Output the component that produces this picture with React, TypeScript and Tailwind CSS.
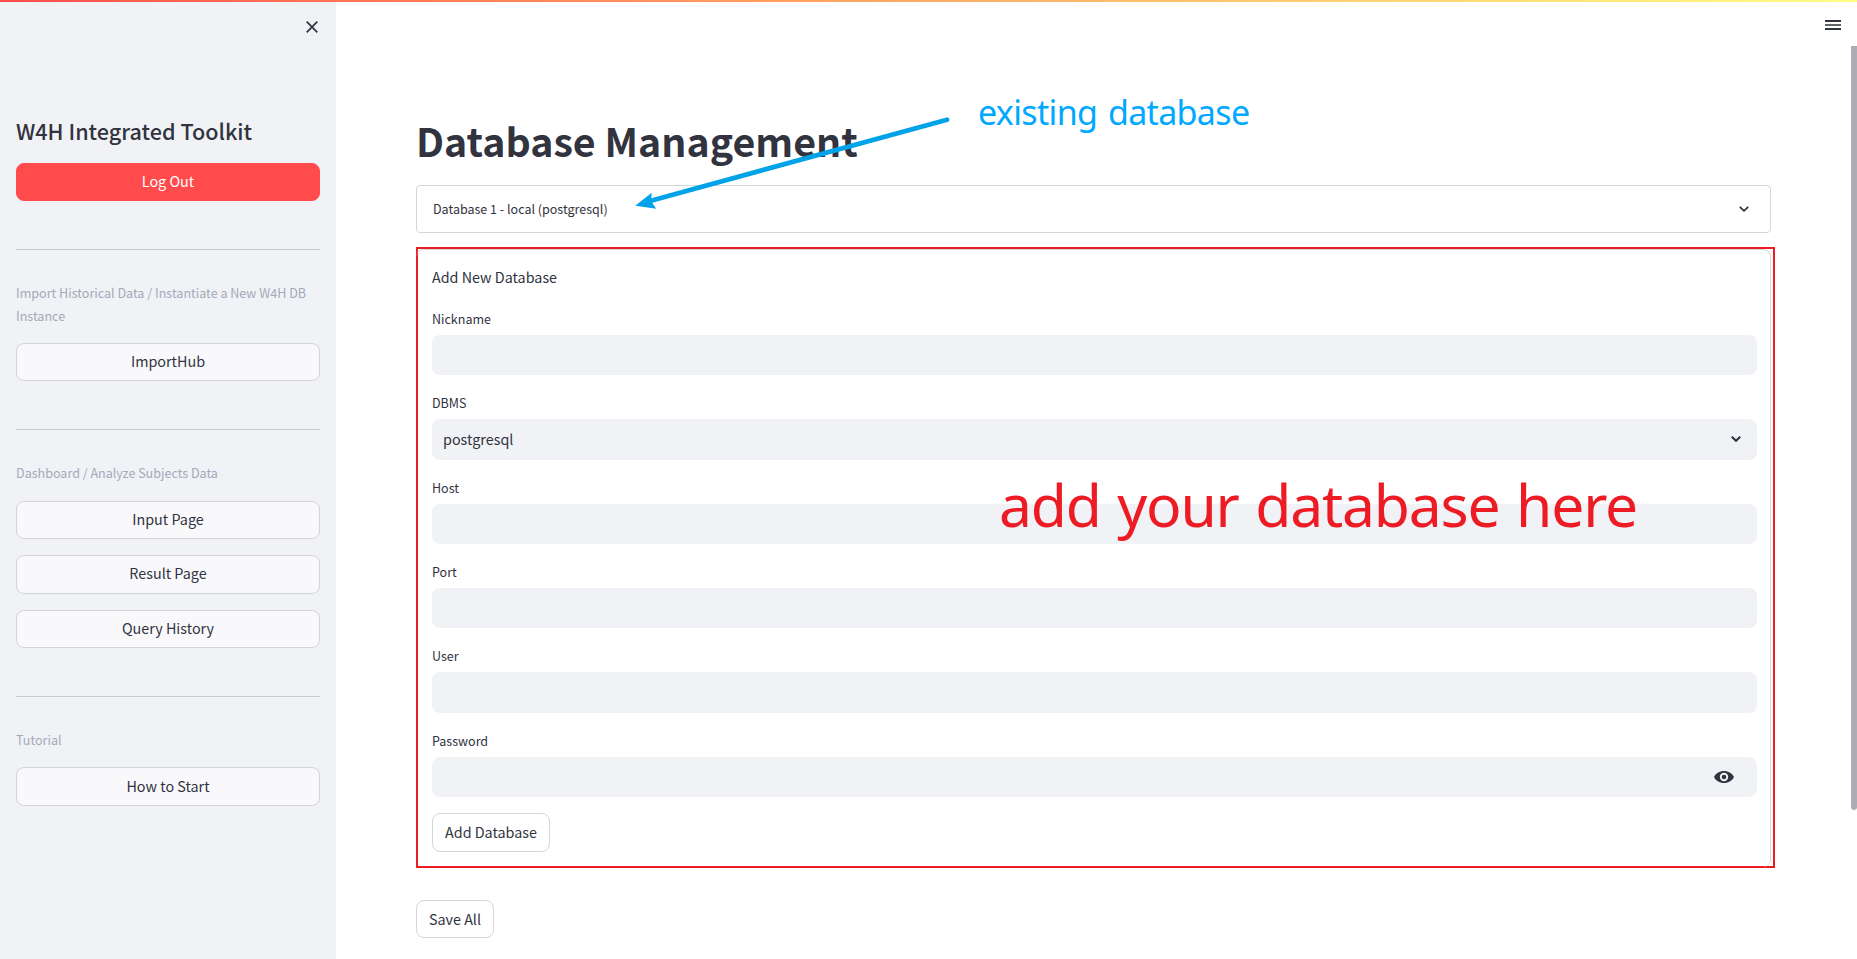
import type { ReactNode } from "react";

function SideButton({ children, primary = false }: { children: ReactNode; primary?: boolean }) {
  return (
    <button
      type="button"
      className={
        "flex h-[38.4px] w-full shrink-0 items-center justify-center rounded-lg border text-[14.35px] leading-[22px] " +
        (primary ? "border-[#ff4b4b] bg-[#ff4b4b] text-white" : "border-[#d3d4d8] bg-[#f9f9fb]")
      }
    >
      <span className="-mt-[1.8px]">{children}</span>
    </button>
  );
}

function Divider() {
  return <hr className="my-8 h-px w-full shrink-0 border-0 bg-[#c9cbd1]" />;
}

function Caption({ children }: { children: ReactNode }) {
  return <p className="-mt-4 text-[12.55px] leading-[22.4px] text-[#a5a9b9]">{children}</p>;
}

function Field({ label, children }: { label: string; children?: ReactNode }) {
  return (
    <div className="flex flex-col gap-1">
      <label className="flex h-6 items-center text-[12.53px] leading-5">{label}</label>
      <div className="flex h-[40.4px] items-center rounded-lg bg-[#f0f2f6] text-[14.35px]">{children}</div>
    </div>
  );
}

function Chevron({ className, strokeWidth }: { className: string; strokeWidth: number }) {
  return (
    <svg viewBox="0 0 10 6" className={className} fill="none" stroke="#31333f" strokeWidth={strokeWidth}>
      <path d="M0.8 0.8 L5 4.8 L9.2 0.8" />
    </svg>
  );
}

export default function App() {
  return (
    <div className="relative flex h-[959px] w-full overflow-hidden bg-white font-['Noto_Sans_CJK_SC',sans-serif] text-[#31333f]">
      <div className="absolute inset-x-0 top-0 z-10 h-0.5 bg-linear-to-r from-[#ff4b4b] to-[#fffd80]" />

      <aside className="flex w-[336px] shrink-0 flex-col bg-[#f0f2f6] px-4">
        <div className="flex h-[118px] justify-end pt-[21px] pr-[2px]">
          <svg viewBox="0 0 12 12" className="size-3" fill="none" stroke="#31333f" strokeWidth="1.7">
            <path d="M0.7 0.7 L11.3 11.3 M11.3 0.7 L0.7 11.3" />
          </svg>
        </div>
        <h2 className="h-[28.8px] text-[21.6px] leading-[26px] font-medium">W4H Integrated Toolkit</h2>
        <div className="flex flex-col gap-4 pt-4">
          <SideButton primary>Log Out</SideButton>
          <Divider />
          <Caption>Import Historical Data / Instantiate a New W4H DB Instance</Caption>
          <SideButton>ImportHub</SideButton>
          <Divider />
          <Caption>Dashboard / Analyze Subjects Data</Caption>
          <SideButton>Input Page</SideButton>
          <SideButton>Result Page</SideButton>
          <SideButton>Query History</SideButton>
          <Divider />
          <Caption>Tutorial</Caption>
          <SideButton>How to Start</SideButton>
        </div>
      </aside>

      <main className="flex min-w-0 flex-1 flex-col pl-20">
        <header className="flex h-[46px] shrink-0 justify-end pt-5 pr-4">
          <div className="flex h-2.5 w-4 flex-col justify-between">
            <span className="h-0.5 bg-[#31333f]" />
            <span className="h-0.5 bg-[#5f616b]" />
            <span className="h-0.5 bg-[#31333f]" />
          </div>
        </header>
        <div className="flex min-h-0 flex-1 justify-between">
          <div className="flex w-[1359px] flex-col items-start pt-[69px]">
            <h1 className="h-[70px] text-[39.3px] leading-[49px] font-bold">Database Management</h1>
            <div className="flex h-12 w-[1355px] shrink-0 items-center justify-between rounded border border-[#d6d6d9] pr-[21px] pl-4 text-[12.53px]">
              <span>Database 1 - local (postgresql)</span>
              <Chevron className="h-1.5 w-2.5" strokeWidth={1.7} />
            </div>

            <div className="mt-3.5 h-[621px] w-[1359px] shrink-0 border-2 border-[#ed1c24]">
              <section className="-ml-0.5 flex h-[618px] w-[1355px] flex-col gap-4 rounded-lg border border-b-0 border-l-0 border-[#d6d6d9] pt-[15.2px] pr-[13px] pl-4">
                <p className="h-[25.6px] text-[14.35px] leading-[24px]">Add New Database</p>
                <Field label="Nickname" />
                <Field label="DBMS">
                  <span className="-mt-[1.5px] flex-1 pl-[11px]">postgresql</span>
                  <Chevron className="mr-4 h-1.5 w-2.5" strokeWidth={2.1} />
                </Field>
                <Field label="Host" />
                <Field label="Port" />
                <Field label="User" />
                <Field label="Password">
                  <svg viewBox="0 0 20 12" className="ml-auto mr-[23px] h-3 w-5">
                    <path
                      fill="#31333f"
                      fillRule="evenodd"
                      d="M10 0C5.5 0 1.7 2.5 0 6c1.7 3.5 5.5 6 10 6s8.3-2.5 10-6C18.3 2.5 14.5 0 10 0Zm0 10.2a4.2 4.2 0 1 1 0-8.4 4.2 4.2 0 0 1 0 8.4Zm0-1.9a2.3 2.3 0 1 0 0-4.6 2.3 2.3 0 0 0 0 4.6Z"
                    />
                  </svg>
                </Field>
                <button type="button" className="flex h-[38.4px] w-[118px] items-center justify-center rounded-lg border border-[#d6d6d9] pb-[1.5px] text-[14.35px]">
                  Add Database
                </button>
              </section>
            </div>

            <button type="button" className="mt-8 flex h-[38.4px] w-[78px] shrink-0 items-center justify-center rounded-lg border border-[#d6d6d9] pb-[1.5px] text-[14.35px]">
              Save All
            </button>
          </div>
          <div className="h-[764px] w-1.5 rounded-b-full bg-[#abadb2]" />
        </div>
      </main>

      <svg className="pointer-events-none absolute top-[110px] left-[630px] h-[105px] w-[325px]" viewBox="630 110 325 105">
        <path d="M947 119.7 L650 201" stroke="#00a2e8" strokeWidth="4.8" strokeLinecap="round" fill="none" />
        <path d="M635.3 205.8 L651.7 192.8 L651 201 L656.2 208.8 Z" fill="#00a2e8" />
      </svg>
      <span className="absolute top-[95px] left-[978px] font-['Noto_Sans',sans-serif] text-[34px] leading-none tracking-[-0.66px] whitespace-nowrap text-[#00a8ff] [word-spacing:2.5px]">
        existing database
      </span>
      <span className="absolute top-[475px] left-[999px] font-['Noto_Sans',sans-serif] text-[58.8px] leading-none tracking-[-1.2px] whitespace-nowrap text-[#ed1c24] [word-spacing:2.5px]">
        add your database here
      </span>
    </div>
  );
}
